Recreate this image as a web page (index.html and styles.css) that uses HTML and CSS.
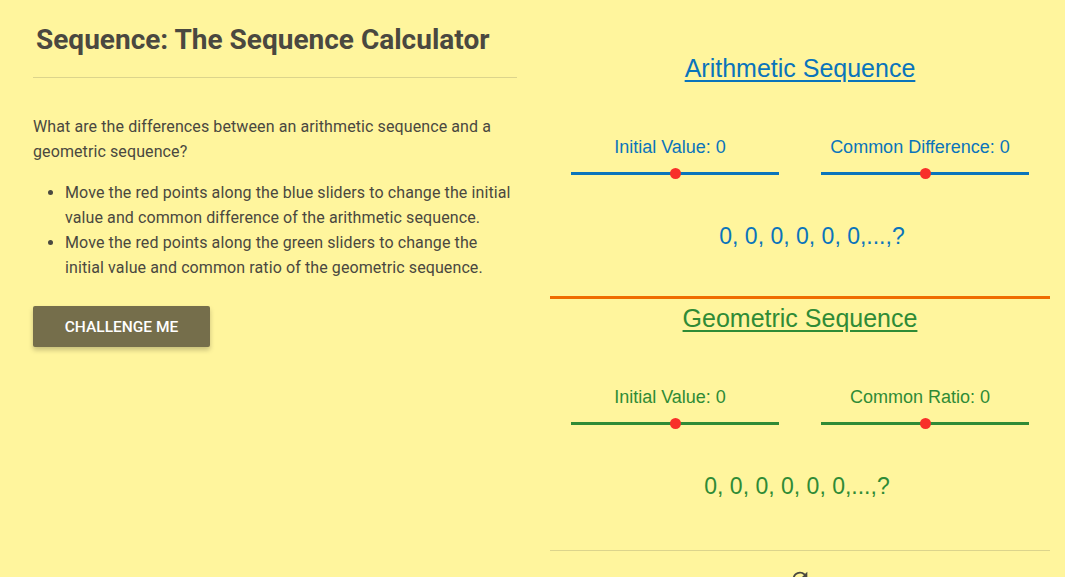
FILE: index.html
```html
<!DOCTYPE html>
<html>
<head>
<meta charset="utf-8">
<link rel="stylesheet" href="styles.css">
</head>
<body>
<div class="page">
  <div class="left">
    <h1 class="title">Sequence: The Sequence Calculator</h1>
    <div class="rule"></div>
    <p class="intro">What are the differences between an arithmetic sequence and a geometric sequence?</p>
    <ul class="tips">
      <li>Move the red points along the blue sliders to change the initial value and common difference of the arithmetic sequence.</li>
      <li>Move the red points along the green sliders to change the initial value and common ratio of the geometric sequence.</li>
    </ul>
    <button class="btn">CHALLENGE ME</button>
  </div>
  <div class="right">
    <section class="seq seq-arith">
      <h2 class="seq-title">Arithmetic Sequence</h2>
      <div class="sliders">
        <div class="slider">
          <div class="label">Initial Value: 0</div>
          <div class="track"><span class="knob"></span></div>
        </div>
        <div class="slider">
          <div class="label">Common Difference: 0</div>
          <div class="track"><span class="knob"></span></div>
        </div>
      </div>
      <div class="values values-arith">0, 0, 0, 0, 0, 0,...,?</div>
    </section>
    <section class="seq seq-geo">
      <h2 class="seq-title">Geometric Sequence</h2>
      <div class="sliders">
        <div class="slider">
          <div class="label">Initial Value: 0</div>
          <div class="track"><span class="knob"></span></div>
        </div>
        <div class="slider">
          <div class="label">Common Ratio: 0</div>
          <div class="track"><span class="knob"></span></div>
        </div>
      </div>
      <div class="values values-geo">0, 0, 0, 0, 0, 0,...,?</div>
    </section>
    <div class="footer">
      <svg class="refresh" width="22" height="22" viewBox="0 0 24 24"><path d="M17.65 6.35A7.958 7.958 0 0 0 12 4a8 8 0 1 0 7.730 10h-2.08A5.99 5.99 0 0 1 12 18a6 6 0 1 1 0-12c1.66 0 3.14.69 4.22 1.78L13 11h7V4l-2.35 2.35z" fill="#4a4840"/></svg>
    </div>
  </div>
</div>
</body>
</html>
```

FILE: styles.css
```css
html, body {
  margin: 0;
  padding: 0;
  background: #fff59d;
  height: 100%;
  overflow: hidden;
}
.page {
  display: grid;
  grid-template-columns: 550px 500px;
  font-family: Roboto, "Liberation Sans", sans-serif;
}
.left {
  padding: 0 33px 0 33px;
  color: #4a4840;
}
.title {
  margin: 0;
  padding: 24px 0 0 3px;
  font-size: 28px;
  line-height: 32px;
  font-weight: 700;
  color: #4a4840;
}
.rule {
  height: 1px;
  background: #dcd48c;
  margin-top: 21px;
}
.intro {
  margin: 36px 0 0 0;
  font-size: 16px;
  line-height: 25px;
  letter-spacing: 0.1px;
}
.tips {
  margin: 16px 0 0 0;
  padding-left: 32px;
  font-size: 16px;
  line-height: 25px;
  letter-spacing: 0.1px;
}
.btn {
  margin-top: 26px;
  width: 177px;
  height: 41px;
  border: none;
  border-radius: 2px;
  background: #756e4b;
  color: #fff;
  font-family: Roboto, "Liberation Sans", sans-serif;
  font-weight: 500;
  font-size: 15.5px;
  box-shadow: 0 3px 5px rgba(0, 0, 0, 0.22);
  padding: 0;
}
.right {
  padding-top: 46px;
  font-family: "Liberation Sans", Arial, sans-serif;
}
.seq {
  height: 250px;
  box-sizing: border-box;
  border-top: 3px solid transparent;
  padding-top: 5px;
}
.seq-arith { color: #0a74bb; }
.seq-geo {
  color: #2f8b36;
  border-top-color: #ef6c00;
  height: 255px;
}
.seq-title {
  margin: 0;
  text-align: center;
  font-size: 25px;
  line-height: 28px;
  font-weight: 400;
  text-decoration: underline;
  text-underline-offset: 3px;
  text-decoration-thickness: 2px;
}
.sliders {
  display: grid;
  grid-template-columns: 1fr 1fr;
  margin-top: 55px;
}
.slider {
  padding: 0 21px;
}
.label {
  text-align: center;
  font-size: 18px;
  line-height: 20px;
  padding-right: 10px;
}
.track {
  margin-top: 10px;
  height: 12px;
  position: relative;
}
.track::before {
  content: "";
  position: absolute;
  left: 0;
  right: 0;
  top: 5px;
  height: 3px;
  background: currentColor;
}
.knob {
  position: absolute;
  left: 50%;
  top: 1px;
  width: 11px;
  height: 11px;
  margin-left: -5.5px;
  border-radius: 50%;
  background: #f8302a;
}
.values {
  margin-top: 44px;
  text-align: center;
  font-size: 23px;
  line-height: 26px;
}
.values-arith {
  padding-left: 24px;
}
.values-geo {
  padding-right: 6px;
}
.footer {
  border-top: 1px solid #dcd48c;
  display: flex;
  justify-content: center;
  padding-top: 17px;
  margin-top: -1px;
}
.refresh {
  display: block;
}
```
